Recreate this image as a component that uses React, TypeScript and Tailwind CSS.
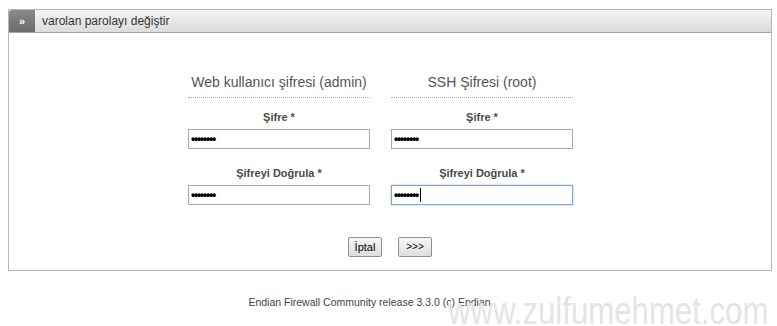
export default function App() {
  const font = { fontFamily: '"Liberation Sans", Arial, sans-serif' };
  const Field = ({ label, focused }: { label: string; focused?: boolean }) => (
    <div className="flex flex-col items-center">
      <span className="text-[11px] font-semibold text-[#4a4a4a] leading-[13px]">{label}</span>
      <div
        className={`mt-[5px] w-[182px] h-[20px] bg-white flex items-center pl-[2px] ${
          focused ? "border border-[#7fa4d6] shadow-[0_0_2px_#9fbfe6]" : "border border-[#a8a8a8]"
        }`}
      >
        <span className="text-[12px] font-bold tracking-[-1.2px] text-black leading-none">••••••••</span>
        {focused && <span className="w-px h-[14px] bg-black ml-[2px]" />}
      </div>
    </div>
  );

  const Column = ({ title, focused }: { title: string; focused?: boolean }) => (
    <div className="w-[182px] flex flex-col">
      <div className="text-[14px] text-[#555] text-center leading-[16px] pb-[7px] border-b border-dotted border-[#aaa]">
        {title}
      </div>
      <div className="mt-[13px]">
        <Field label="Şifre *" />
      </div>
      <div className="mt-[18px]">
        <Field label="Şifreyi Doğrula *" focused={focused} />
      </div>
    </div>
  );

  return (
    <div className="w-[777px] h-[326px] bg-white relative overflow-hidden" style={font}>
      <div className="pt-[9px] px-[8px]">
        <div className="w-[764px] h-[262px] border border-[#b5b5b5] flex flex-col">
          <div className="flex h-[23px] border-b border-[#a5a5a5]">
            <div className="w-[26px] bg-gradient-to-b from-[#8a8a8a] to-[#6c6c6c] rounded-tl-[3px] flex items-center justify-center text-white text-[11px] font-bold">
              »
            </div>
            <div className="flex-1 bg-gradient-to-b from-[#f4f4f4] to-[#dcdcdc] flex items-center pl-[7px] text-[12px] text-[#333]">
              varolan parolayı değiştir
            </div>
          </div>
          <div className="flex justify-center gap-[21px] pt-[41px] pr-[19px]">
            <Column title="Web kullanıcı şifresi (admin)" />
            <Column title="SSH Şifresi (root)" focused />
          </div>
          <div className="flex justify-center gap-[16px] mt-[32px]">
            <button className="w-[34px] h-[20px] border border-[#8f8f8f] rounded-[2px] bg-gradient-to-b from-[#f6f6f6] to-[#dedede] text-[11px] text-black leading-none">
              İptal
            </button>
            <button className="w-[34px] h-[20px] border border-[#8f8f8f] rounded-[2px] bg-gradient-to-b from-[#f6f6f6] to-[#dedede] text-[10px] text-black leading-none">
              &gt;&gt;&gt;
            </button>
          </div>
        </div>
      </div>
      <div className="text-center text-[10.5px] text-[#444] mt-[24px] pr-[38px]">
        Endian Firewall Community release 3.3.0 (c) Endian
      </div>
      <div className="absolute left-[448px] top-[292px] text-[38px] text-[#e4e4e4] leading-none origin-left scale-x-[0.82] whitespace-nowrap">
        www.zulfumehmet.com
      </div>
    </div>
  );
}
